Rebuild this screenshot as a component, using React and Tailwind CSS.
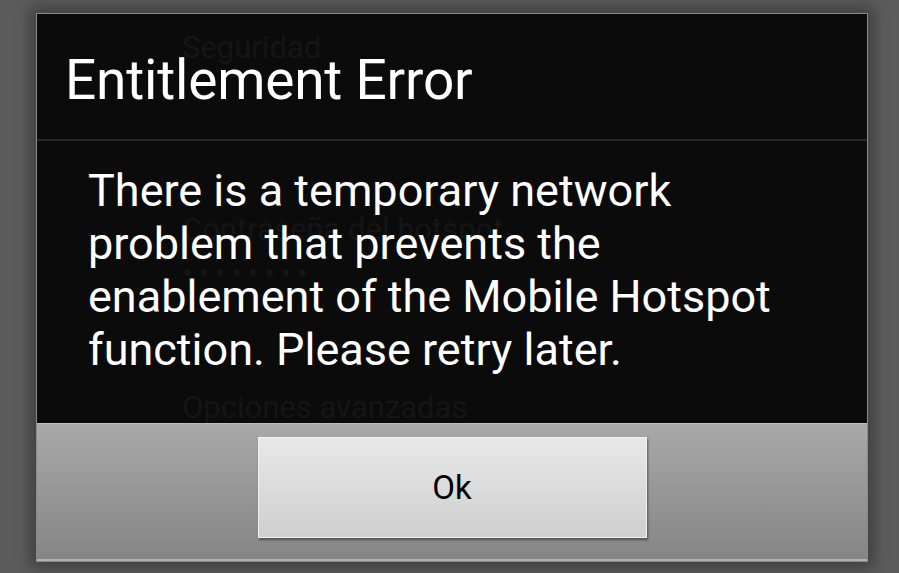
// Android-style "Entitlement Error" alert dialog
export default function App() {
  return (
    <div
      className="w-[899px] h-[573px] overflow-hidden bg-[#5c5c5c] pt-[13px] pl-[36px]"
      style={{ fontFamily: "Roboto, 'Noto Sans', sans-serif" }}
    >
      <div className="w-[832px] h-[549px] flex flex-col border border-[#8a8a8a] shadow-[0_0_14px_6px_rgba(40,40,40,0.55)]">
        {/* dialog content */}
        <div className="relative flex-1 flex flex-col bg-[#0b0b0b] overflow-hidden">
          {/* faint settings screen showing through */}
          <div className="absolute inset-0 text-[#151515] text-[31px] leading-none select-none pointer-events-none">
            <div className="absolute left-[145px] top-[18px]">Seguridad</div>
            <div className="absolute left-[145px] top-[200px]">Contraseña del hotspot</div>
            <div className="absolute left-[145px] top-[244px] tracking-[6px]">••••••••</div>
            <div className="absolute left-[145px] top-[378px]">Opciones avanzadas</div>
          </div>

          <div className="relative h-[127px] flex items-center pl-[28px] border-b-2 border-[#262626]">
            <h1 className="text-white text-[55px] leading-none tracking-[-0.2px] pt-[8px]">
              Entitlement Error
            </h1>
          </div>
          <div className="relative flex-1 pl-[51px] pt-[23px]">
            <p className="text-white text-[45px] leading-[53px] whitespace-nowrap">
              There is a temporary network
              <br />
              problem that prevents the
              <br />
              enablement of the Mobile Hotspot
              <br />
              function. Please retry later.
            </p>
          </div>
        </div>

        {/* button bar */}
        <div className="h-[138px] flex items-start justify-center pt-[13px] bg-gradient-to-b from-[#a9a9a9] to-[#858585] border-t border-[#bdbdbd] border-b-2 border-b-[#b0b0b0]">
          <button className="w-[389px] h-[101px] flex items-center justify-center bg-gradient-to-b from-[#e8e8e8] to-[#cfcfcf] border border-[#f2f2f2] shadow-[1px_2px_2px_rgba(60,60,60,0.7)] text-black text-[33px]">
            Ok
          </button>
        </div>
      </div>
    </div>
  );
}
